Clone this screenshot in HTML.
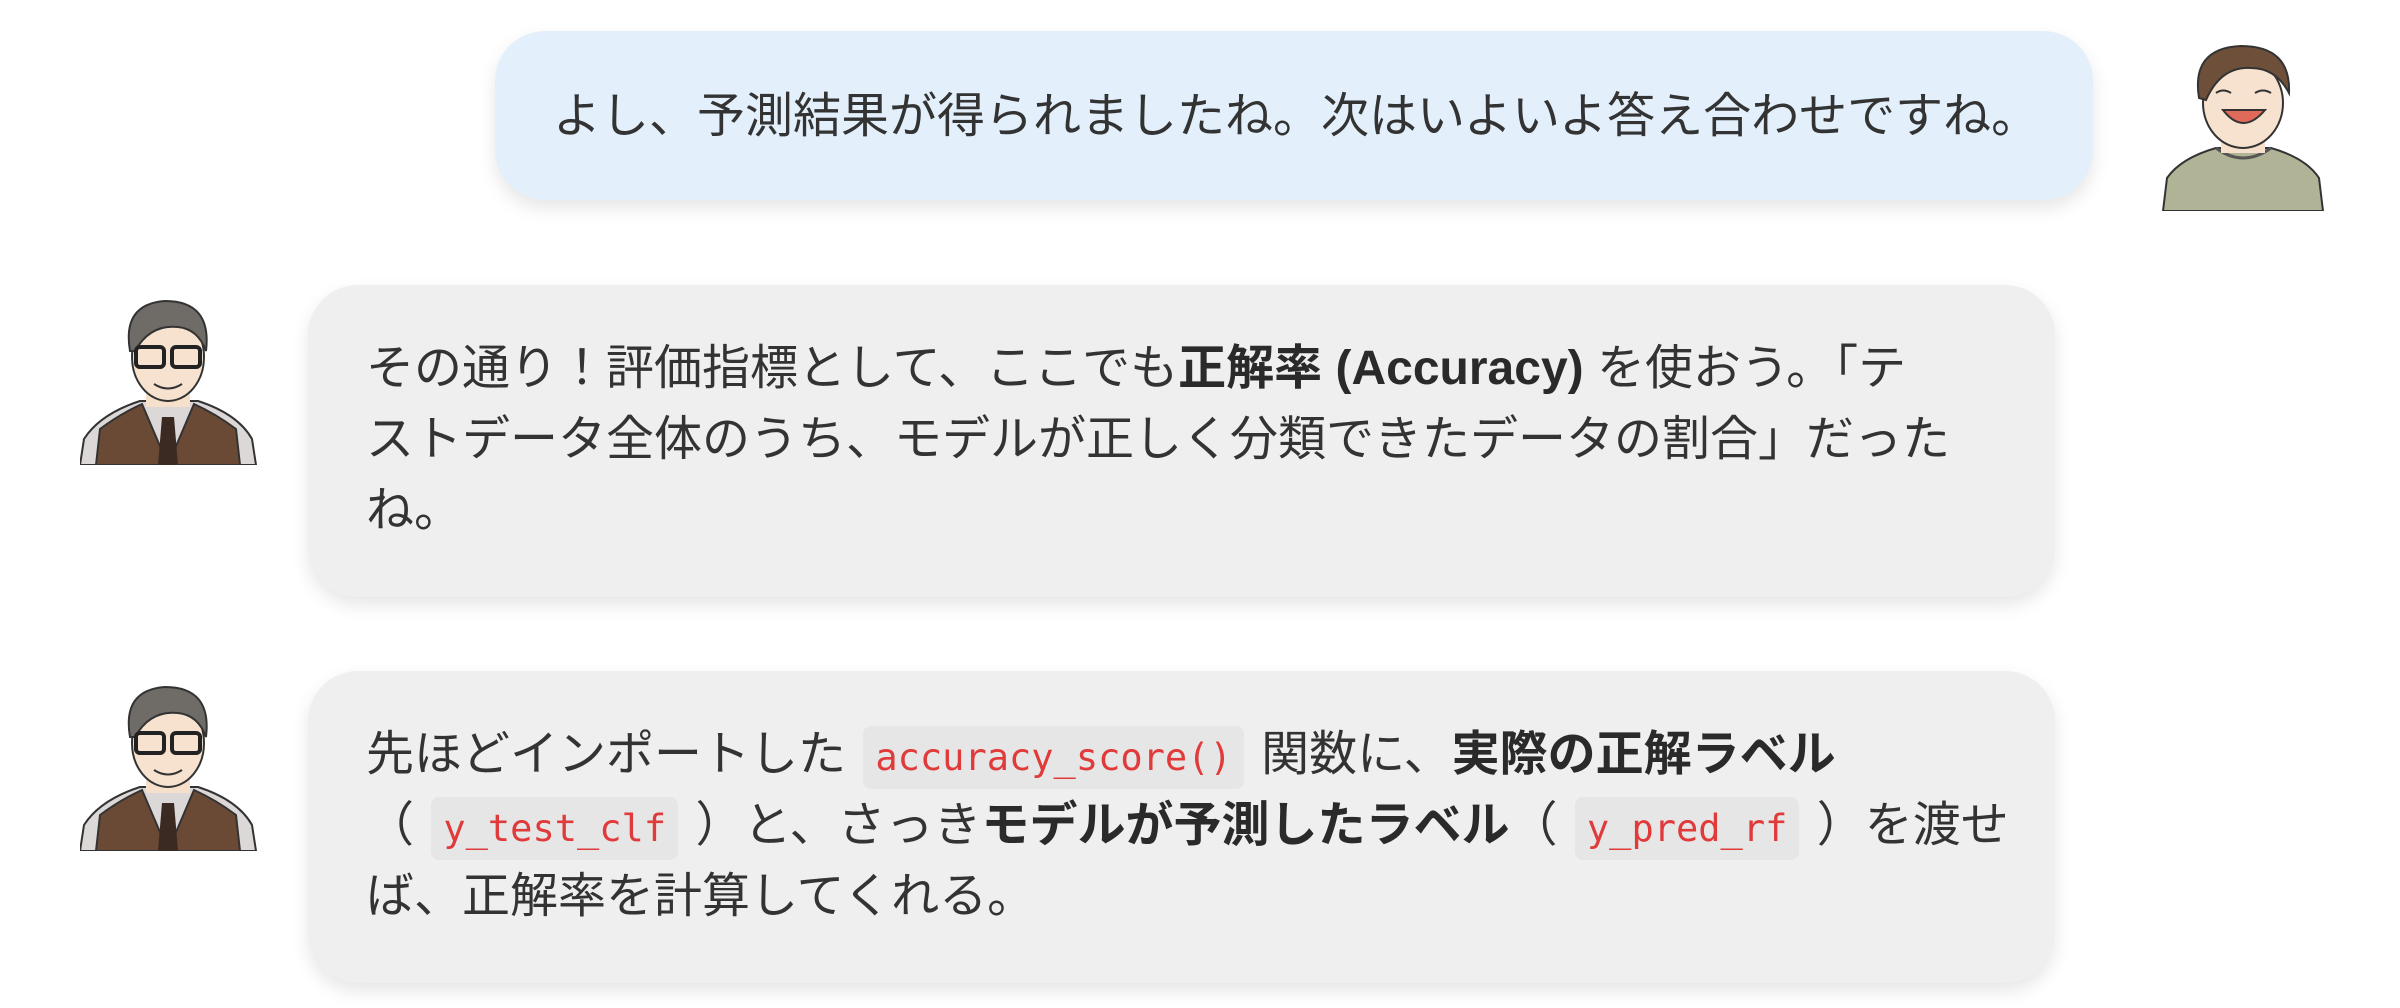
<!DOCTYPE html>
<html><head><meta charset="utf-8"><style>
html,body{margin:0;padding:0;background:#fff;width:2400px;height:1008px;overflow:hidden}
body{position:relative;font-family:"Liberation Sans","Noto Sans CJK JP",sans-serif;color:#333}
.b{position:absolute;border-radius:50px;box-shadow:0 8px 18px rgba(0,0,0,0.10);font-size:48px;line-height:71px;white-space:nowrap;box-sizing:border-box}
.u{left:495px;top:31px;width:1598px;height:169px;background:#e3f0fb;padding:50px 0 0 58px}
.g{background:#efefef;padding:48px 0 0 58px;left:308px;width:1747px;height:312px}
b{font-weight:700;color:#2a2a2a}
code{font-family:"DejaVu Sans Mono","Liberation Mono",monospace;font-size:37px;line-height:1;color:#e03a3a;background:#e6e6e6;border-radius:8px;padding:10px 12px;margin:0 4px}
.av{position:absolute}
</style></head><body>

<div class="b u">よし、予測結果が得られましたね。次はいよいよ答え合わせですね。</div>

<svg class="av" style="left:2161px;top:38px" width="164" height="173" viewBox="0 0 164 173">
<path d="M2 173 L6 140 Q20 120 55 110 L110 110 Q145 120 158 140 L162 173Z" fill="#b1b396" stroke="#333" stroke-width="2"/>
<path d="M55 110 Q82 130 110 110" fill="none" stroke="#555" stroke-width="3"/>
<rect x="60" y="85" width="44" height="30" fill="#f6dfcb"/>
<ellipse cx="82" cy="65" rx="40" ry="45" fill="#f6e2cf" stroke="#333" stroke-width="2"/>
<path d="M38 60 Q30 10 80 8 Q130 8 128 55 Q115 30 90 30 Q60 28 45 62Z" fill="#6e4f3a" stroke="#333" stroke-width="2"/>
<path d="M62 72 Q82 98 104 72Z" fill="#e06a5a" stroke="#333" stroke-width="2"/>
<path d="M55 55 Q62 50 70 55 M94 55 Q102 50 110 55" stroke="#333" stroke-width="2" fill="none"/>
</svg>

<div class="b g" style="top:285px">その通り！評価指標として、ここでも<b>正解率 (Accuracy)</b> を使おう。「テ<br>ストデータ全体のうち、モデルが正しく分類できたデータの割合」だった<br>ね。</div>

<div class="b g" style="top:671px">先ほどインポートした <code>accuracy_score()</code> 関数に、<b>実際の正解ラベル</b><br>（ <code>y_test_clf</code> ）と、さっき<b>モデルが予測したラベル</b>（ <code>y_pred_rf</code> ）を渡せ<br>ば、正解率を計算してくれる。</div>

<svg class="av" style="left:80px;top:289px" width="177" height="176" viewBox="0 0 177 176" id="t">
<path d="M0 176 L4 150 Q20 125 60 112 L118 112 Q158 125 172 150 L176 176Z" fill="#ddd8d8" stroke="#333" stroke-width="2"/>
<path d="M16 176 L20 140 Q40 125 62 115 L88 176Z M160 176 L156 140 Q136 125 114 115 L88 176Z" fill="#6b4a35" stroke="#333" stroke-width="2"/>
<path d="M82 128 L94 128 L98 176 L78 176Z" fill="#3a2a22"/>
<rect x="66" y="88" width="44" height="30" fill="#f6dfcb"/>
<ellipse cx="88" cy="68" rx="36" ry="44" fill="#f6e2cf" stroke="#333" stroke-width="2"/>
<path d="M50 62 Q42 15 85 12 Q132 12 126 62 Q118 40 98 38 Q70 35 55 62Z" fill="#6f6b67" stroke="#333" stroke-width="2"/>
<rect x="56" y="58" width="28" height="20" rx="4" fill="none" stroke="#222" stroke-width="4"/>
<rect x="92" y="58" width="28" height="20" rx="4" fill="none" stroke="#222" stroke-width="4"/>
<path d="M74 95 Q88 104 102 95" stroke="#333" stroke-width="2" fill="none"/>
</svg>
<svg class="av" style="left:80px;top:675px" width="177" height="176"><use href="#t"/></svg>
</body></html>
